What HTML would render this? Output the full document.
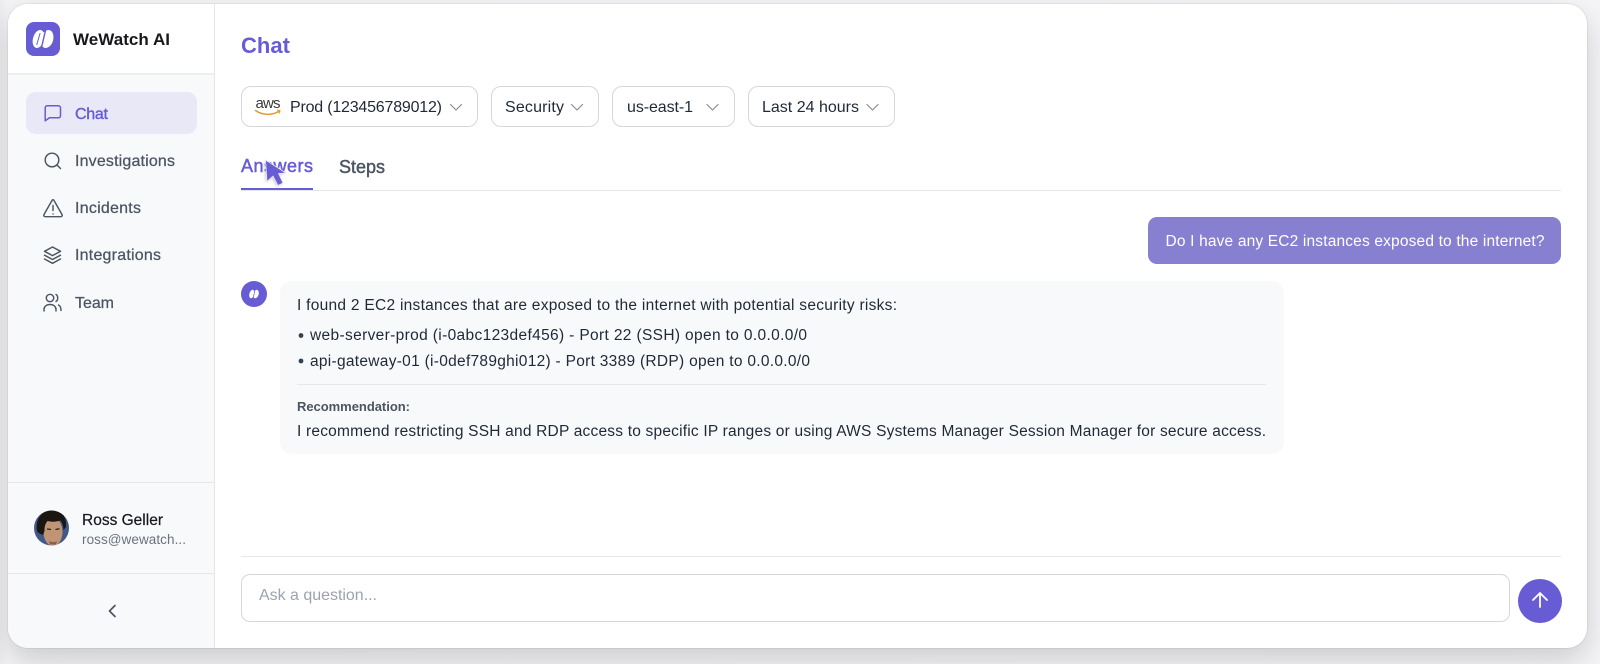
<!DOCTYPE html>
<html lang="en">
<head>
<meta charset="utf-8">
<title>WeWatch AI - Chat</title>
<style>
html,body{margin:0;padding:0;width:1600px;height:664px;overflow:hidden;background:#f3f3f6;font-family:"Liberation Sans",sans-serif}
.bg{position:absolute;inset:0;background:linear-gradient(90deg,#ececef 0,#f4f4f7 8px,#f5f5f8 100%)}
.window{position:absolute;left:8px;top:4px;width:1579px;height:644px;background:#fff;border-radius:20px;overflow:hidden;box-shadow:0 12px 30px rgba(0,0,0,.17),0 0 0 1px #e6e7ea}
.side{position:absolute;left:0;top:0;width:206px;height:644px;background:#f8f9fb;border-right:1px solid #e5e7eb}
.head{position:absolute;left:0;top:0;width:206px;height:69px;background:#fff;border-bottom:2px solid #eceef1}
.hr{position:absolute;height:1px;background:#e5e7eb}
.box{position:absolute;box-sizing:border-box}
.dd{top:86px;height:41px;background:#fff;border:1.5px solid #d6d7db;border-radius:10px}
svg.layer{position:absolute;left:0;top:0}
text{font-family:"Liberation Sans",sans-serif}
</style>
</head>
<body>
<div class="bg"></div>
<div class="window">
  <div class="side"><div class="head"></div></div>
  <div class="box" style="left:18px;top:88px;width:171px;height:42px;background:#e9e8f6;border-radius:10px"></div>
  <div class="hr" style="left:0;top:478px;width:206px"></div>
  <div class="hr" style="left:0;top:569px;width:206px"></div>
</div>
<div class="box dd" style="left:241px;width:237px"></div>
<div class="box dd" style="left:490.500px;width:108.500px"></div>
<div class="box dd" style="left:612px;width:123px"></div>
<div class="box dd" style="left:748px;width:147px"></div>
<div class="hr" style="left:241px;top:190px;width:1320px;background:#e5e7eb"></div>
<div class="box" style="left:241px;top:188px;width:72px;height:2px;background:#675cd4"></div>
<div class="box" style="left:1148px;top:216.500px;width:413px;height:47.500px;background:#877fd0;border-radius:9px"></div>
<div class="box" style="left:280px;top:281px;width:1004px;height:173px;background:#f8f9fb;border-radius:12px"></div>
<div class="hr" style="left:297px;top:384px;width:969px;background:#e5e7eb"></div>
<div class="hr" style="left:241px;top:556px;width:1320px;background:#e5e7eb"></div>
<div class="box" style="left:241px;top:574px;width:1269px;height:48px;background:#fff;border:1.5px solid #d6d7db;border-radius:9px"></div>
<div class="box" style="left:1518px;top:578.500px;width:44px;height:44px;background:#675cd4;border-radius:50%"></div>

<svg class="layer" width="1600" height="664" viewBox="0 0 1600 664" xmlns="http://www.w3.org/2000/svg">
  <defs>
    <clipPath id="av"><circle cx="51.500" cy="528" r="17.500"/></clipPath>
    <filter id="soft" x="-40%" y="-40%" width="180%" height="180%"><feGaussianBlur stdDeviation="1.500"/></filter>
  </defs>

  <!-- logo -->
  <rect x="26" y="22" width="34" height="34" rx="8" fill="#675cd4"/>
  <ellipse cx="38.500" cy="39" rx="5.500" ry="9.200" transform="rotate(16 38.500 39)" fill="#fff"/>
  <ellipse cx="47" cy="39" rx="6.200" ry="9.200" transform="rotate(16 47 39)" fill="#fff"/>
  <path d="M45.500 30.500L41.500 47.500" stroke="#675cd4" stroke-width="1.400" fill="none" stroke-linecap="round"/>
  <path d="M40 33.500L36.800 44.500" stroke="#675cd4" stroke-width="1" fill="none" stroke-linecap="round"/>
  <text x="73" y="45" font-size="17" font-weight="700" fill="#17181c" textLength="97">WeWatch AI</text>

  <!-- nav icons -->
  <path d="M47 105.800h11.500a2 2 0 0 1 2 2v8a2 2 0 0 1-2 2H49.500l-4.300 3V107.800a2 2 0 0 1 1.800-2z" fill="none" stroke="#675cd4" stroke-width="1.500" stroke-linecap="round" stroke-linejoin="round"/>
  <g fill="none" stroke="#4b5563" stroke-width="1.450" stroke-linecap="round" stroke-linejoin="round">
    <circle cx="52" cy="160" r="6.800"/><path d="M57 165l3.500 3.500"/>
    <path d="M52 200.500l-8 14c-.6 1.100.1 2.200 1.300 2.200h15.400c1.200 0 1.900-1.100 1.300-2.200l-8-14c-.5-1-1.500-1-2 0z"/><path d="M53 205.500v5"/><path d="M53 214h.01"/>
    <path d="M52.500 247l-8 4.300 8 4.300 8-4.300z"/><path d="M44.500 255.200l8 4.300 8-4.300"/><path d="M44.500 259l8 4.300 8-4.300"/>
    <circle cx="50" cy="298" r="3.700"/><path d="M44 311v-1.500c0-3 2.500-5 6-5s6 2 6 5v1.500"/><path d="M56 294.500c2 .8 2.500 5.500 0 7"/><path d="M58.500 305c1.800.8 2.500 2.500 2.500 5.500"/>
  </g>

  <!-- nav labels -->
  <text x="75" y="119" font-size="16" fill="#675cd4" stroke="#675cd4" stroke-width=".4" textLength="33">Chat</text>
  <text x="75" y="166" font-size="16" fill="#4b5563" stroke="#4b5563" stroke-width=".25" textLength="100">Investigations</text>
  <text x="75" y="213" font-size="16" fill="#4b5563" stroke="#4b5563" stroke-width=".25" textLength="66">Incidents</text>
  <text x="75" y="260" font-size="16" fill="#4b5563" stroke="#4b5563" stroke-width=".25" textLength="86">Integrations</text>
  <text x="75" y="308" font-size="16" fill="#4b5563" stroke="#4b5563" stroke-width=".25" textLength="39">Team</text>

  <!-- avatar -->
  <g clip-path="url(#av)">
    <rect x="33" y="510" width="37" height="36" fill="#41598a"/>
    <ellipse cx="53" cy="532" rx="9.500" ry="14" fill="#c09474"/>
    <path d="M49 541c3 1.500 6 1.500 8 0l-1 3.500h-6z" fill="#8a6048"/>
    <path d="M37 531c-2-12 5-21 15-21s15 7 14 17l-2.500 3c-.3-4-1-7-3-9.500-5 1.500-9 1.500-13 .5-2.500 3-3 6-3 10l-1.500 4c-2.500-1-5-2-6-4z" fill="#1c1613"/>
    <path d="M47 529l4 .5M55.500 529.500l4-.8" stroke="#33221a" stroke-width="1.300"/>
  </g>
  <text x="82" y="525" font-size="15.500" fill="#17181c" stroke="#17181c" stroke-width=".2" textLength="81">Ross Geller</text>
  <text x="82" y="544" font-size="13.500" fill="#6b7280" textLength="104">ross@wewatch...</text>
  <path d="M115 605.500l-5.500 5.500 5.500 5.500" fill="none" stroke="#4b5563" stroke-width="1.700" stroke-linecap="round" stroke-linejoin="round"/>

  <!-- heading -->
  <text x="241" y="53" font-size="22" font-weight="700" fill="#675cd4" textLength="49">Chat</text>

  <!-- filters -->
  <text x="255.500" y="108" font-size="15" fill="#3a3a3a" textLength="25">aws</text>
  <path d="M255.500 110.500c7 5 17 5 24 .5" fill="none" stroke="#e39b2d" stroke-width="1.500" stroke-linecap="round"/>
  <path d="M277 110l3 .8-1 2.700" fill="none" stroke="#e39b2d" stroke-width="1.100"/>
  <g font-size="16" fill="#1f2937">
    <text x="290" y="112" textLength="152">Prod (123456789012)</text>
    <text x="505" y="112" textLength="59">Security</text>
    <text x="627" y="112" textLength="66">us-east-1</text>
    <text x="762" y="112" textLength="97">Last 24 hours</text>
  </g>
  <g fill="none" stroke="#8a8f98" stroke-width="1.200" stroke-linecap="round" stroke-linejoin="round">
    <path d="M450.500 104.500l5.500 5.500 5.500-5.500"/>
    <path d="M571.500 104.500l5.500 5.500 5.500-5.500"/>
    <path d="M707 104.500l5.500 5.500 5.500-5.500"/>
    <path d="M867 104.500l5.500 5.500 5.500-5.500"/>
  </g>

  <!-- tabs -->
  <text x="241" y="172" font-size="18" fill="#675cd4" stroke="#675cd4" stroke-width=".5" textLength="72">Answers</text>
  <text x="339" y="173" font-size="18" fill="#4b5563" stroke="#4b5563" stroke-width=".45" textLength="46">Steps</text>

  <!-- user message -->
  <text x="1165.500" y="246" font-size="15.500" fill="#fff" textLength="379">Do I have any EC2 instances exposed to the internet?</text>

  <!-- bot avatar -->
  <circle cx="254" cy="294" r="13" fill="#675cd4"/>
  <ellipse cx="251.800" cy="294" rx="2.400" ry="4.400" transform="rotate(16 251.800 294)" fill="#fff"/>
  <ellipse cx="255.800" cy="294" rx="2.900" ry="4.400" transform="rotate(16 255.800 294)" fill="#fff"/>
  <path d="M255 290l-1.800 8" stroke="#675cd4" stroke-width=".7" fill="none"/>

  <!-- bot message -->
  <g font-size="15.500" fill="#1f2937">
    <text x="297" y="310" textLength="600">I found 2 EC2 instances that are exposed to the internet with potential security risks:</text>
    <circle cx="301" cy="335.500" r="2.400" fill="#374151"/>
    <text x="310" y="340" textLength="497">web-server-prod (i-0abc123def456) - Port 22 (SSH) open to 0.0.0.0/0</text>
    <circle cx="301" cy="361" r="2.400" fill="#374151"/>
    <text x="310" y="366" textLength="500">api-gateway-01 (i-0def789ghi012) - Port 3389 (RDP) open to 0.0.0.0/0</text>
    <text x="297" y="411" font-size="13" font-weight="700" fill="#4b5563" textLength="113">Recommendation:</text>
    <text x="297" y="436" textLength="969">I recommend restricting SSH and RDP access to specific IP ranges or using AWS Systems Manager Session Manager for secure access.</text>
  </g>

  <!-- input -->
  <text x="259" y="600" font-size="16" fill="#9ca3af" textLength="118">Ask a question...</text>
  <path d="M1540 607v-14M1533 600l7-7 7 7" fill="none" stroke="#fff" stroke-width="1.800" stroke-linecap="round" stroke-linejoin="round"/>

  <!-- cursor -->
  <path d="M265.500 160l1.500 21.500 6-5.500 5 9.500 5-2.500-4.500-9.500 7.500-.5z" fill="#9a9aa5" opacity=".6" filter="url(#soft)" transform="translate(-1 1)"/>
  <path d="M265.500 160l1.500 21.500 6-5.500 5 9.500 5-2.500-4.500-9.500 7.500-.5z" fill="#675cd4" stroke="#e9e8f0" stroke-width=".8" stroke-linejoin="round"/>
</svg>
</body>
</html>
